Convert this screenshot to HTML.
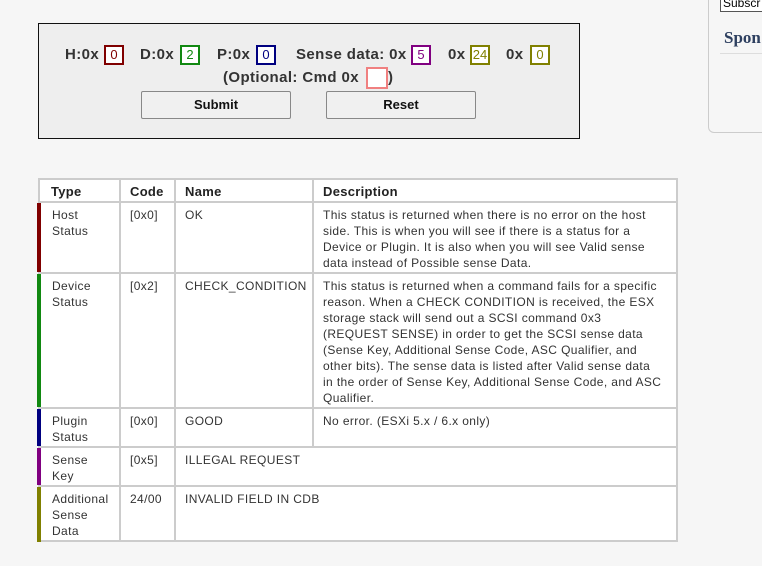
<!DOCTYPE html>
<html><head><style>
body{margin:0;width:762px;height:566px;background:#f6f6f6;font-family:"Liberation Sans",Arial,sans-serif;position:relative;overflow:hidden}
.form{position:absolute;left:38px;top:23px;width:540px;height:114px;border:1px solid #111;background:#eee;}
.b{position:absolute;font-weight:bold;font-size:15px;color:#333;white-space:nowrap;letter-spacing:0.4px}
.bx{position:absolute;width:16px;height:16px;border:2px solid;background:#fff;font-size:13px;text-align:center;line-height:16px}
.btn{position:absolute;top:67px;width:148px;height:26px;border:1px solid #888;border-radius:2px;background:#f0f0f0;font-weight:bold;font-size:13px;text-align:center;line-height:26px;color:#111}
.t{position:absolute;left:38px;top:178px;width:636px;height:360px;border:2px solid #ccc;background:#fff}
.c{position:absolute;font-size:12px;line-height:16px;color:#333;white-space:nowrap;letter-spacing:0.38px}
.h{font-weight:bold;font-size:13px;color:#222;letter-spacing:0.3px}
.hl{position:absolute;height:2px;background:#ccc;left:0;width:636px}
.vl{position:absolute;width:2px;background:#ccc}
.bar{position:absolute;left:-3px;width:4px}
</style></head><body>
<div class="form">
<div class="b" style="left:26px;top:22px">H:0x</div>
<div class="bx" style="left:65px;top:21px;border-color:#800000;color:#800000">0</div>
<div class="b" style="left:101px;top:22px">D:0x</div>
<div class="bx" style="left:141px;top:21px;border-color:#118811;color:#118811">2</div>
<div class="b" style="left:178px;top:22px">P:0x</div>
<div class="bx" style="left:217px;top:21px;border-color:#000080;color:#000080">0</div>
<div class="b" style="left:257px;top:22px">Sense data: 0x</div>
<div class="bx" style="left:372px;top:21px;border-color:#800080;color:#800080">5</div>
<div class="b" style="left:409px;top:22px">0x</div>
<div class="bx" style="left:431px;top:21px;border-color:#808000;color:#808000">24</div>
<div class="b" style="left:467px;top:22px">0x</div>
<div class="bx" style="left:491px;top:21px;border-color:#808000;color:#808000">0</div>
<div class="b" style="left:184px;top:45px">(Optional: Cmd 0x</div>
<div class="bx" style="left:327px;top:43px;width:18px;height:18px;border-color:#f08080"></div>
<div class="b" style="left:349px;top:45px">)</div>
<div class="btn" style="left:102px">Submit</div>
<div class="btn" style="left:287px">Reset</div>
</div>

<div style="position:absolute;left:708px;top:-10px;width:70px;height:141px;border:1px solid #ccc;border-radius:6px;background:#f6f6f6"></div>
<div style="position:absolute;left:720px;top:-6px;width:50px;height:16px;border:1px solid #555;background:#fff;font-size:12px;line-height:16px;padding-left:2px">Subscr</div>
<div style="position:absolute;left:724px;top:28px;font-family:'Liberation Serif',serif;font-weight:bold;font-size:17px;color:#2e4060">Spon</div>
<div style="position:absolute;left:720px;top:53px;width:50px;height:1px;background:#ddd"></div>

<div class="t">
<div class="hl" style="top:21px"></div>
<div class="hl" style="top:92px"></div>
<div class="hl" style="top:227px"></div>
<div class="hl" style="top:266px"></div>
<div class="hl" style="top:305px"></div>
<div class="vl" style="left:79px;top:0;height:360px"></div>
<div class="vl" style="left:134px;top:0;height:360px"></div>
<div class="vl" style="left:272px;top:0;height:266px"></div>
<div class="bar" style="top:23px;height:69px;background:#800000"></div>
<div class="bar" style="top:94px;height:133px;background:#118811"></div>
<div class="bar" style="top:229px;height:37px;background:#000080"></div>
<div class="bar" style="top:268px;height:37px;background:#800080"></div>
<div class="bar" style="top:307px;height:55px;background:#808000"></div>
<div class="c h" style="left:11px;top:4px">Type</div>
<div class="c h" style="left:90px;top:4px">Code</div>
<div class="c h" style="left:145px;top:4px">Name</div>
<div class="c h" style="left:283px;top:4px">Description</div>

<div class="c" style="left:12px;top:27px">Host<br>Status</div>
<div class="c" style="left:90px;top:27px">[0x0]</div>
<div class="c" style="left:145px;top:27px">OK</div>
<div class="c" style="left:283px;top:27px">This status is returned when there is no error on the host<br>side. This is when you will see if there is a status for a<br>Device or Plugin. It is also when you will see Valid sense<br>data instead of Possible sense Data.</div>

<div class="c" style="left:12px;top:98px">Device<br>Status</div>
<div class="c" style="left:90px;top:98px">[0x2]</div>
<div class="c" style="left:145px;top:98px">CHECK_CONDITION</div>
<div class="c" style="left:283px;top:98px">This status is returned when a command fails for a specific<br>reason. When a CHECK CONDITION is received, the ESX<br>storage stack will send out a SCSI command 0x3<br>(REQUEST SENSE) in order to get the SCSI sense data<br>(Sense Key, Additional Sense Code, ASC Qualifier, and<br>other bits). The sense data is listed after Valid sense data<br>in the order of Sense Key, Additional Sense Code, and ASC<br>Qualifier.</div>

<div class="c" style="left:12px;top:233px">Plugin<br>Status</div>
<div class="c" style="left:90px;top:233px">[0x0]</div>
<div class="c" style="left:145px;top:233px">GOOD</div>
<div class="c" style="left:283px;top:233px">No error. (ESXi 5.x / 6.x only)</div>

<div class="c" style="left:12px;top:272px">Sense<br>Key</div>
<div class="c" style="left:90px;top:272px">[0x5]</div>
<div class="c" style="left:145px;top:272px">ILLEGAL REQUEST</div>

<div class="c" style="left:12px;top:311px">Additional<br>Sense<br>Data</div>
<div class="c" style="left:90px;top:311px">24/00</div>
<div class="c" style="left:145px;top:311px">INVALID FIELD IN CDB</div>
</div>
</body></html>
